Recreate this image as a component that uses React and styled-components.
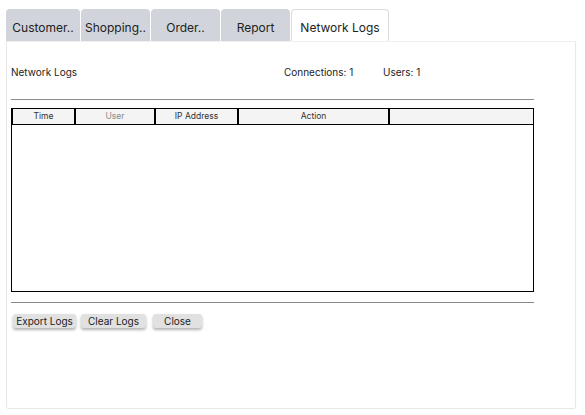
import React from "react";
import styled, { createGlobalStyle } from "styled-components";

const GlobalStyle = createGlobalStyle`
  body {
    margin: 0;
    background: #fff;
    font-family: Inter, "Noto Sans", sans-serif;
    color: #222;
  }
`;

const Page = styled.div`
  padding: 9px 9px 6px 6px;
  width: 570px;
`;

const TabBar = styled.div`
  display: flex;
  gap: 1px;
  height: 32px;
`;

const Tab = styled.div`
  width: ${(p) => p.$width}px;
  box-sizing: border-box;
  display: flex;
  align-items: center;
  justify-content: center;
  padding-top: 4px;
  font-size: 12px;
  color: #222;
  white-space: nowrap;
  border-radius: 4px 4px 0 0;
  background: ${(p) => (p.$active ? "#fff" : "#d1d4da")};
  border: 1px solid ${(p) => (p.$active ? "#dcdcdc" : "#d1d4da")};
  border-bottom: none;
`;

const Panel = styled.div`
  box-sizing: border-box;
  height: 368px;
  border: 1px solid #e8e8e8;
  border-top-color: #f0f0f0;
  border-radius: 0 0 3px 3px;
  padding: 23px 41px 0 4px;
`;

const InfoRow = styled.div`
  display: flex;
  height: 14px;
  align-items: center;
  font-size: 10px;
  color: #222;
`;

const InfoItem = styled.span`
  width: ${(p) => p.$width}px;
`;

const Rule = styled.div`
  height: 1px;
  background: ${(p) => p.$color};
  margin-top: ${(p) => p.$top}px;
`;

const Table = styled.div`
  box-sizing: border-box;
  height: 184px;
  margin-top: 8px;
  border: 1px solid #000;
`;

const HeaderRow = styled.div`
  display: grid;
  grid-template-columns: 64px 80px 83px 151px 1fr;
  height: 15px;
  background: #f4f4f4;
  border-bottom: 1px solid #000;
`;

const HeaderCell = styled.div`
  display: flex;
  align-items: center;
  justify-content: center;
  font-size: 8.5px;
  line-height: 1;
  color: ${(p) => (p.$muted ? "#8a8a8a" : "#333")};
  border-right: ${(p) => (p.$last ? "none" : "2px solid #000")};
  border-left: ${(p) => (p.$first ? "1px solid #000" : "none")};
`;

const ButtonRow = styled.div`
  display: flex;
  margin-top: 11px;
  padding-left: 2px;
`;

const Button = styled.button`
  width: ${(p) => p.$width}px;
  height: 14px;
  margin-right: ${(p) => p.$gap}px;
  padding: 0;
  border: none;
  border-radius: 3px;
  background: #e1e1e1;
  box-shadow: 0 2px 3px rgba(0, 0, 0, 0.3);
  font-family: Inter, "Noto Sans", sans-serif;
  font-size: 10px;
  color: #222;
`;

const tabs = [
  { label: "Customer..", width: 74 },
  { label: "Shopping..", width: 69 },
  { label: "Order..", width: 69 },
  { label: "Report", width: 69 },
  { label: "Network Logs", width: 98, active: true },
];

const columns = ["Time", "User", "IP Address", "Action", ""];

export default function App() {
  return (
    <Page>
      <GlobalStyle />
      <TabBar>
        {tabs.map((t) => (
          <Tab key={t.label} $width={t.width} $active={t.active}>
            {t.label}
          </Tab>
        ))}
      </TabBar>
      <Panel>
        <InfoRow>
          <InfoItem $width={273}>Network Logs</InfoItem>
          <InfoItem $width={99}>Connections: 1</InfoItem>
          <InfoItem>Users: 1</InfoItem>
        </InfoRow>
        <Rule $color="#8c8a8b" $top={20} />
        <Table>
          <HeaderRow>
            {columns.map((c, i) => (
              <HeaderCell
                key={i}
                $first={i === 0}
                $last={i === columns.length - 1}
                $muted={c === "User"}
              >
                {c}
              </HeaderCell>
            ))}
          </HeaderRow>
        </Table>
        <Rule $color="#8c8588" $top={10} />
        <ButtonRow>
          <Button $width={63} $gap={5}>Export Logs</Button>
          <Button $width={65} $gap={7}>Clear Logs</Button>
          <Button $width={49} $gap={0}>Close</Button>
        </ButtonRow>
      </Panel>
    </Page>
  );
}
